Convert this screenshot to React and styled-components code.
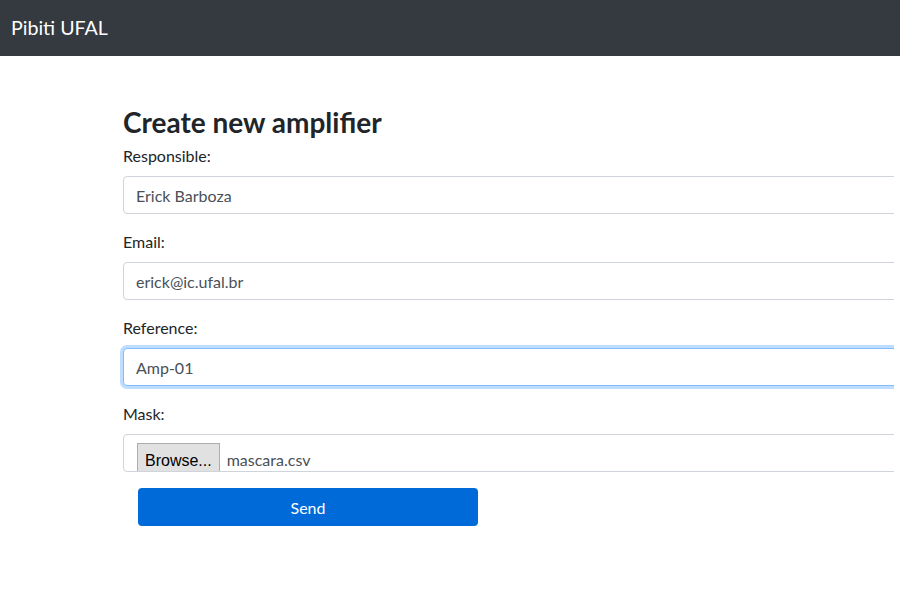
import React, { useEffect, useRef } from 'react'
import styled, { createGlobalStyle, css } from 'styled-components'

const GlobalStyle = createGlobalStyle`
  body {
    margin: 0;
    background: #fff;
    font-family: 'Lato', 'Liberation Sans', sans-serif;
    color: #212529;
    overflow: hidden;
  }
`

const NavBar = styled.header`
  height: 56px;
  background: #343a40;
  display: flex;
  align-items: center;
  padding-left: 11px;
`

const Brand = styled.span`
  color: #fff;
  font-size: 19.6px;
  line-height: 1;
`

const Main = styled.main`
  padding: 48px 0 0 113px;
`

const Form = styled.form`
  box-sizing: border-box;
  width: 781px;
  padding: 0 0 10px 10px;
  overflow: clip;
`

const Title = styled.h2`
  margin: 0 0 4px;
  font-size: 28px;
  font-weight: 700;
  line-height: 36px;
`

const Group = styled.div`
  margin-bottom: 16px;
`

const Label = styled.label`
  display: block;
  font-size: 16px;
  line-height: 24px;
  margin-bottom: 8px;
`

const Input = styled.input`
  box-sizing: border-box;
  width: 800px;
  height: 38px;
  padding: 6px 12px;
  font-family: 'Lato', sans-serif;
  font-size: 16px;
  color: #495057;
  border: 1px solid #ced4da;
  border-radius: 4px;
  outline: none;
  caret-color: #212529;
  ${p => p.$focused && css`
    border-color: #80bdff;
    box-shadow: 0 0 0 3px rgba(128, 189, 255, 0.5);
  `}
`

const FileBox = styled.div`
  box-sizing: border-box;
  width: 800px;
  height: 38px;
  border: 1px solid #ced4da;
  border-radius: 4px;
  padding: 8px 0 0 13px;
  display: flex;
  align-items: flex-start;
  gap: 7px;
  overflow: hidden;
`

const BrowseButton = styled.button`
  flex: none;
  height: 32px;
  padding: 3px 7px 0;
  background: #e1e1e1;
  border: 1px solid #adadad;
  font-family: 'Liberation Sans', Arial, sans-serif;
  font-size: 16px;
  color: #000;
  line-height: 26px;
`

const FileName = styled.span`
  font-size: 16px;
  color: #495057;
  line-height: 30px;
  padding-top: 2px;
`

const SendButton = styled.button`
  display: block;
  margin: 16px 0 0 15px;
  width: 340px;
  height: 38px;
  background: #006ad9;
  color: #fff;
  border: none;
  border-radius: 4px;
  font-family: 'Lato', sans-serif;
  font-size: 16px;
`

export default function App() {
  const refInput = useRef(null)

  useEffect(() => {
    const el = refInput.current
    if (el) {
      el.focus({ preventScroll: true })
      el.setSelectionRange(el.value.length, el.value.length)
    }
  }, [])

  return (
    <>
      <GlobalStyle />
      <NavBar>
        <Brand>Pibiti UFAL</Brand>
      </NavBar>
      <Main>
        <Form onSubmit={e => e.preventDefault()}>
          <Title>Create new amplifier</Title>
          <Group>
            <Label>Responsible:</Label>
            <Input defaultValue='Erick Barboza' />
          </Group>
          <Group>
            <Label>Email:</Label>
            <Input defaultValue='erick@ic.ufal.br' />
          </Group>
          <Group>
            <Label>Reference:</Label>
            <Input $focused ref={refInput} defaultValue='Amp-01' />
          </Group>
          <div>
            <Label>Mask:</Label>
            <FileBox>
              <BrowseButton type='button'>Browse...</BrowseButton>
              <FileName>mascara.csv</FileName>
            </FileBox>
          </div>
          <SendButton type='submit'>Send</SendButton>
        </Form>
      </Main>
    </>
  )
}
